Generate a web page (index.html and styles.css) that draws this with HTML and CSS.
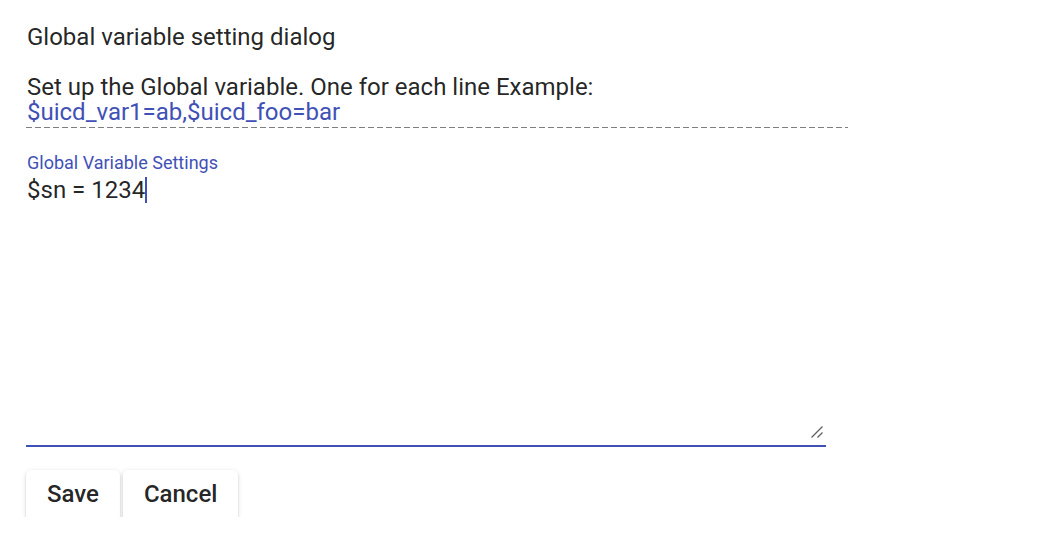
FILE: index.html
```html
<!DOCTYPE html>
<html>
<head>
<meta charset="utf-8">
<link rel="stylesheet" href="styles.css">
</head>
<body>
<div class="dialog">
  <h2 class="title">Global variable setting dialog</h2>
  <div class="field field-disabled">
    <div class="field-label">Set up the Global variable. One for each line Example:</div>
    <div class="field-value">$uicd_var1=ab,$uicd_foo=bar</div>
  </div>
  <div class="field field-area">
    <div class="area-label">Global Variable Settings</div>
    <div class="area">
      <div class="area-text">$sn = 1234<span class="caret"></span></div>
      <svg class="grip" width="16" height="16" viewBox="0 0 16 16"><path d="M2.5 13.5 L13.5 2.5 M8.5 13.5 L13.5 8.5" stroke="#5f5f5f" stroke-width="1.3" fill="none"/></svg>
    </div>
  </div>
  <div class="actions">
    <button class="btn">Save</button>
    <button class="btn">Cancel</button>
  </div>
</div>
</body>
</html>
```
FILE: styles.css
```css
html, body {
  margin: 0;
  padding: 0;
  background: #fff;
}
body {
  font-family: Roboto, "Noto Sans", sans-serif;
  color: rgba(0, 0, 0, 0.87);
}
.dialog {
  padding: 23px 0 0 26px;
  width: 822px;
}
.title {
  margin: 0;
  padding-left: 1px;
  font-size: 24px;
  line-height: 28px;
  font-weight: 400;
}
.field-disabled {
  margin-top: 24px;
  background-image: linear-gradient(to right, rgba(0,0,0,0.5) 0, rgba(0,0,0,0.5) 62%, transparent 62%);
  background-size: 9px 1px;
  background-repeat: repeat-x;
  background-position: 0 bottom;
  padding-bottom: 3px;
}
.field-label, .field-value {
  font-size: 24px;
  line-height: 25px;
  padding-left: 1px;
}
.field-value {
  color: #3f51b5;
}
.field-area {
  margin-top: 25px;
  width: 800px;
}
.area-label {
  font-size: 18px;
  line-height: 20px;
  color: #3f51b5;
  padding-left: 1px;
}
.area {
  position: relative;
  height: 269px;
  margin-top: 3px;
  border-bottom: 2px solid #3f51b5;
}
.area-text {
  font-size: 24px;
  line-height: 28px;
  padding-left: 1px;
}
.caret {
  display: inline-block;
  width: 2px;
  height: 26px;
  margin-top: 1px;
  background: #3f51b5;
  vertical-align: top;
}
.grip {
  position: absolute;
  right: 1px;
  bottom: 5px;
}
.actions {
  margin-top: 23px;
  display: flex;
  gap: 3px;
  height: 47px;
  clip-path: inset(-10px -10px 0 -10px);
}
.btn {
  flex: none;
  height: 54px;
  padding: 0 21px 7px;
  border: none;
  border-radius: 5px;
  background: #fff;
  font-family: Roboto, "Noto Sans", sans-serif;
  font-size: 24px;
  font-weight: 500;
  color: rgba(0, 0, 0, 0.87);
  box-shadow: 0 3px 1px -2px rgba(0,0,0,.2), 0 2px 2px 0 rgba(0,0,0,.14), 0 1px 5px 0 rgba(0,0,0,.12);
}
```
